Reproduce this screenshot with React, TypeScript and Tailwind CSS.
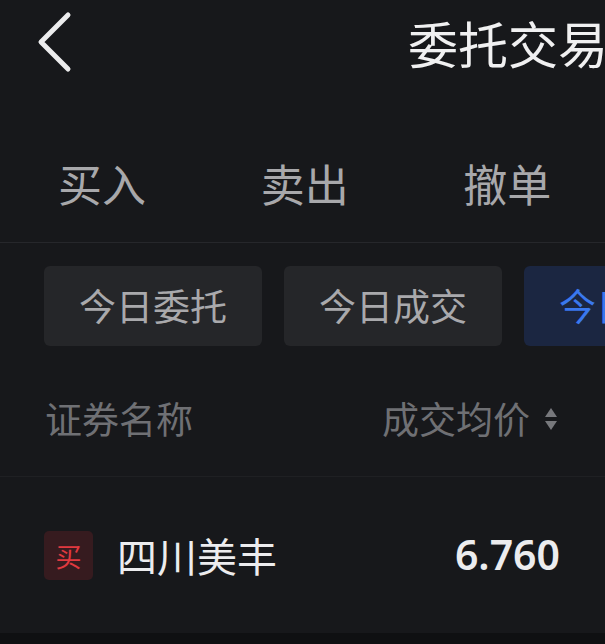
import { ReactNode } from "react";

const CJK = { fontFamily: '"Noto Sans CJK SC", "Noto Sans", sans-serif' };

function FilterChip({ children, active = false }: { children: ReactNode; active?: boolean }) {
  return (
    <div
      className={`flex h-[80px] w-[218px] shrink-0 items-center justify-center rounded-[6px] text-[37px] ${
        active ? "bg-[#1b2641] text-[#3a78ee]" : "bg-[#252629] text-[#a9a9ac]"
      }`}
    >
      {children}
    </div>
  );
}

export default function App() {
  return (
    <div className="flex h-[644px] w-[605px] flex-col overflow-hidden bg-[#17181b]" style={CJK}>
      {/* Top bar */}
      <header className="flex h-[84px] shrink-0 items-center overflow-hidden whitespace-nowrap">
        <svg className="ml-[35px] shrink-0" width="38" height="62" viewBox="0 0 38 62" fill="none">
          <path d="M33 4 L6 31 L33 58" stroke="#ececed" strokeWidth="5" strokeLinecap="round" strokeLinejoin="round" />
        </svg>
        <h1 className="ml-[335px] text-[50px] leading-none text-[#f0f0f1]">委托交易</h1>
      </header>

      {/* Buy / sell / cancel tabs */}
      <nav className="grid h-[159px] shrink-0 grid-cols-3 items-center border-b border-[#26272b] pt-[40px] text-[44px] text-[#a8a8ab]">
        <span className="pl-[58px]">买入</span>
        <span className="pl-[59px]">卖出</span>
        <span className="pl-[60px]">撤单</span>
      </nav>

      {/* Filter chips */}
      <div className="mt-[23px] flex gap-[22px] pl-[44px]">
        <FilterChip>今日委托</FilterChip>
        <FilterChip>今日成交</FilterChip>
        <FilterChip active>今日撤单</FilterChip>
      </div>

      {/* Column headings */}
      <div className="flex h-[131px] shrink-0 items-center justify-between border-b border-[#1f2023] pt-[16px] pl-[45px] pr-[47px] text-[37px] text-[#6f7074]">
        <span>证券名称</span>
        <span className="flex items-center gap-[14px]">
          成交均价
          <svg width="14" height="24" viewBox="0 0 14 24">
            <path d="M7 1 L13 10 L1 10 Z" fill="#77787c" />
            <path d="M1 14 L13 14 L7 23 Z" fill="#77787c" />
          </svg>
        </span>
      </div>

      {/* Trade row */}
      <div className="flex h-[156px] shrink-0 items-center pl-[44px] pr-[45px]">
        <span className="flex h-[49px] w-[49px] items-center justify-center rounded-[5px] bg-[#361b1f] text-[26px] text-[#e0393f]">
          买
        </span>
        <span className="ml-[24px] text-[40px] text-[#ececee]">四川美丰</span>
        <span
          className="ml-auto text-[41px] font-semibold text-[#ececee]"
          style={{ fontFamily: '"Noto Sans", "Open Sans", sans-serif' }}
        >
          6.760
        </span>
      </div>

      <div className="flex-1 bg-[#0f1012]" />
    </div>
  );
}
